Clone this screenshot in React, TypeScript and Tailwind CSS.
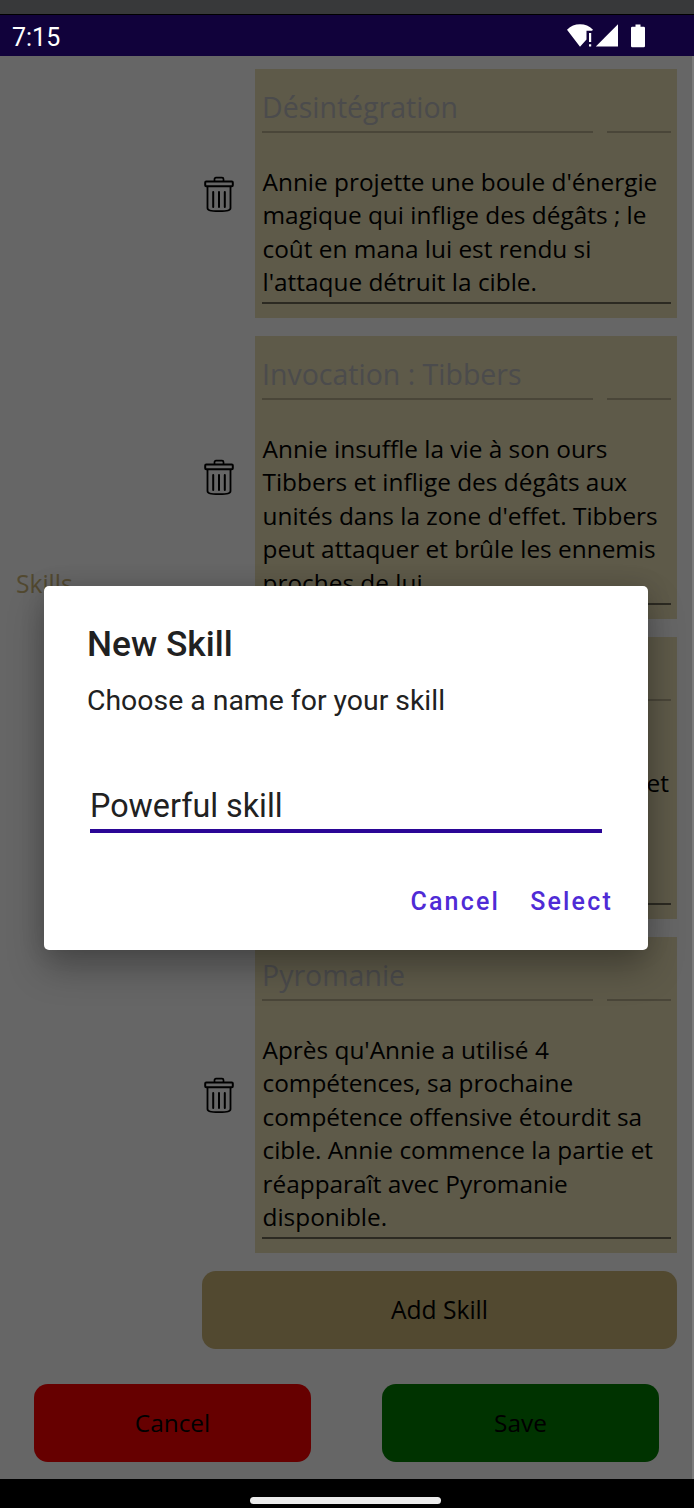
type Skill = { name: string; lines: string[] };

const skills: Skill[] = [
  {
    name: "Désintégration",
    lines: [
      "Annie projette une boule d'énergie",
      "magique qui inflige des dégâts ; le",
      "coût en mana lui est rendu si",
      "l'attaque détruit la cible.",
    ],
  },
  {
    name: "Invocation : Tibbers",
    lines: [
      "Annie insuffle la vie à son ours",
      "Tibbers et inflige des dégâts aux",
      "unités dans la zone d'effet. Tibbers",
      "peut attaquer et brûle les ennemis",
      "proches de lui.",
    ],
  },
  {
    name: "",
    lines: ["", "et", "", "", ""],
  },
  {
    name: "Pyromanie",
    lines: [
      "Après qu'Annie a utilisé 4",
      "compétences, sa prochaine",
      "compétence offensive étourdit sa",
      "cible. Annie commence la partie et",
      "réapparaît avec Pyromanie",
      "disponible.",
    ],
  },
];

function TrashIcon() {
  return (
    <svg width="30" height="37" viewBox="0 0 30 37" fill="none" stroke="#000" className="shrink-0">
      <path d="M10.500 5.500V3Q10.500 1.700 12 1.700H18Q19.500 1.700 19.500 3V5.500" strokeWidth="1.700" />
      <rect x="1.200" y="5.600" width="27.600" height="4.600" rx="1" strokeWidth="2" />
      <path d="M3.500 10.500V32Q3.500 33.800 6 34.500Q8 35.200 15 35.200Q22 35.200 24 34.500Q26.500 33.800 26.500 32V10.500" strokeWidth="1.800" />
      <path d="M9.200 16V31M15 16V31M20.800 16V31" strokeWidth="2" strokeLinecap="round" />
    </svg>
  );
}

function StatusBar() {
  return (
    <div className="flex h-[42px] shrink-0 items-center justify-between border-t border-black bg-[#11023b] pl-[12px] pr-[48px]">
      <span className="pt-[3px] font-['Roboto',sans-serif] text-[25px] leading-none text-white">7:15</span>
      <svg width="79" height="26" viewBox="0 0 79 26" fill="#fff">
        <path d="M0 6.700Q5.500 1.300 13 1.300Q20.500 1.300 26 6.700L25 7.700H19.500V16.500L13 23.800Z" />
        <path d="M22 10h2.200v9H22zM22 21.300h2.200v2.300H22z" />
        <path d="M51 1.300V23.500H28.800Z" />
        <path d="M68.500 1.500h5v2.200h3.200q1.300 0 1.300 1.300v18q0 1.300-1.300 1.300H65.300q-1.300 0-1.300-1.300V5q0-1.300 1.300-1.300h3.200z" />
      </svg>
    </div>
  );
}

function SkillCard({ skill }: { skill: Skill }) {
  return (
    <div className="flex items-center justify-between">
      <div className="pl-[2px] pt-px">
        <TrashIcon />
      </div>
      <div className="w-[422px] bg-[#5e5a49] pb-[14px] pl-[7px] pr-[6px] pt-[18px]">
        <div className="flex gap-[14px]">
          <div className="h-[46px] flex-1 border-b-2 border-[#4a4639] text-[28.500px] leading-[41px] text-[#4b4b4c]">
            {skill.name}
          </div>
          <div className="h-[46px] w-[64px] border-b-2 border-[#4a4639]" />
        </div>
        <div className="mt-[31px] border-b-2 border-[#2c2a22] pb-[3.500px] pl-[0.500px] pt-[0.500px] text-[24.400px] leading-[33.500px] text-black">
          {skill.lines.map((line, i) => (
            <div key={i} className={line === "et" ? "h-[33.500px] pr-[2px] text-right" : "h-[33.500px] whitespace-nowrap"}>
              {line}
            </div>
          ))}
        </div>
      </div>
    </div>
  );
}

function NewSkillDialog() {
  return (
    <div className="absolute left-[44px] top-[586px] flex h-[364px] w-[604px] flex-col rounded-[5px] bg-white px-[43px] font-['Roboto',sans-serif] text-[#212121] shadow-[0_18px_36px_rgba(0,0,0,0.28),0_0_24px_rgba(0,0,0,0.12)]">
      <h1 className="mt-[36px] text-[35.300px] font-medium leading-[44px]">New Skill</h1>
      <p className="mt-[17px] text-[28.400px] leading-[36px]">Choose a name for your skill</p>
      <div className="ml-[3px] mt-[65px] h-[49px] w-[512px] border-b-[4px] border-[#2a0696] text-[32.300px] leading-[44px]">
        Powerful skill
      </div>
      <div className="-mr-[12px] mt-[51px] flex justify-end gap-[30px] pr-[4px] text-[25px] font-medium leading-[36px] tracking-[2.200px] text-[#4f2bd6]">
        <button>Cancel</button>
        <button>Select</button>
      </div>
    </div>
  );
}

export default function App() {
  return (
    <div className="relative flex h-[1508px] w-[694px] flex-col overflow-hidden bg-[#666666] font-['Open_Sans',sans-serif]">
      <div className="h-[14px] shrink-0 bg-[#38393a]" />
      <StatusBar />
      <main className="flex h-[1423px] shrink-0 flex-col border-r-2 border-[#7b7b7b] pt-[13px]">
        <div className="flex">
          <div className="w-[202px] shrink-0 pl-[16px] pt-[498px] text-[24.600px] leading-[33.500px] text-[#524930]">
            Skills
          </div>
          <div className="flex w-[475px] flex-col gap-[18px]">
            {skills.map((skill, i) => (
              <SkillCard key={i} skill={skill} />
            ))}
            <button className="h-[78px] rounded-[14px] bg-[#524930] text-[24.600px] text-black">Add Skill</button>
          </div>
        </div>
        <div className="mt-[35px] flex justify-between pl-[34px] pr-[33px] text-[24.400px] text-black">
          <button className="h-[78px] w-[277px] rounded-[14px] bg-[#660000]">Cancel</button>
          <button className="h-[78px] w-[277px] rounded-[14px] bg-[#003300]">Save</button>
        </div>
      </main>
      <div className="flex flex-1 justify-center bg-black pr-[3px] pt-[18px]">
        <div className="h-[7px] w-[191px] rounded-full bg-[#ececec]" />
      </div>
      <NewSkillDialog />
    </div>
  );
}
